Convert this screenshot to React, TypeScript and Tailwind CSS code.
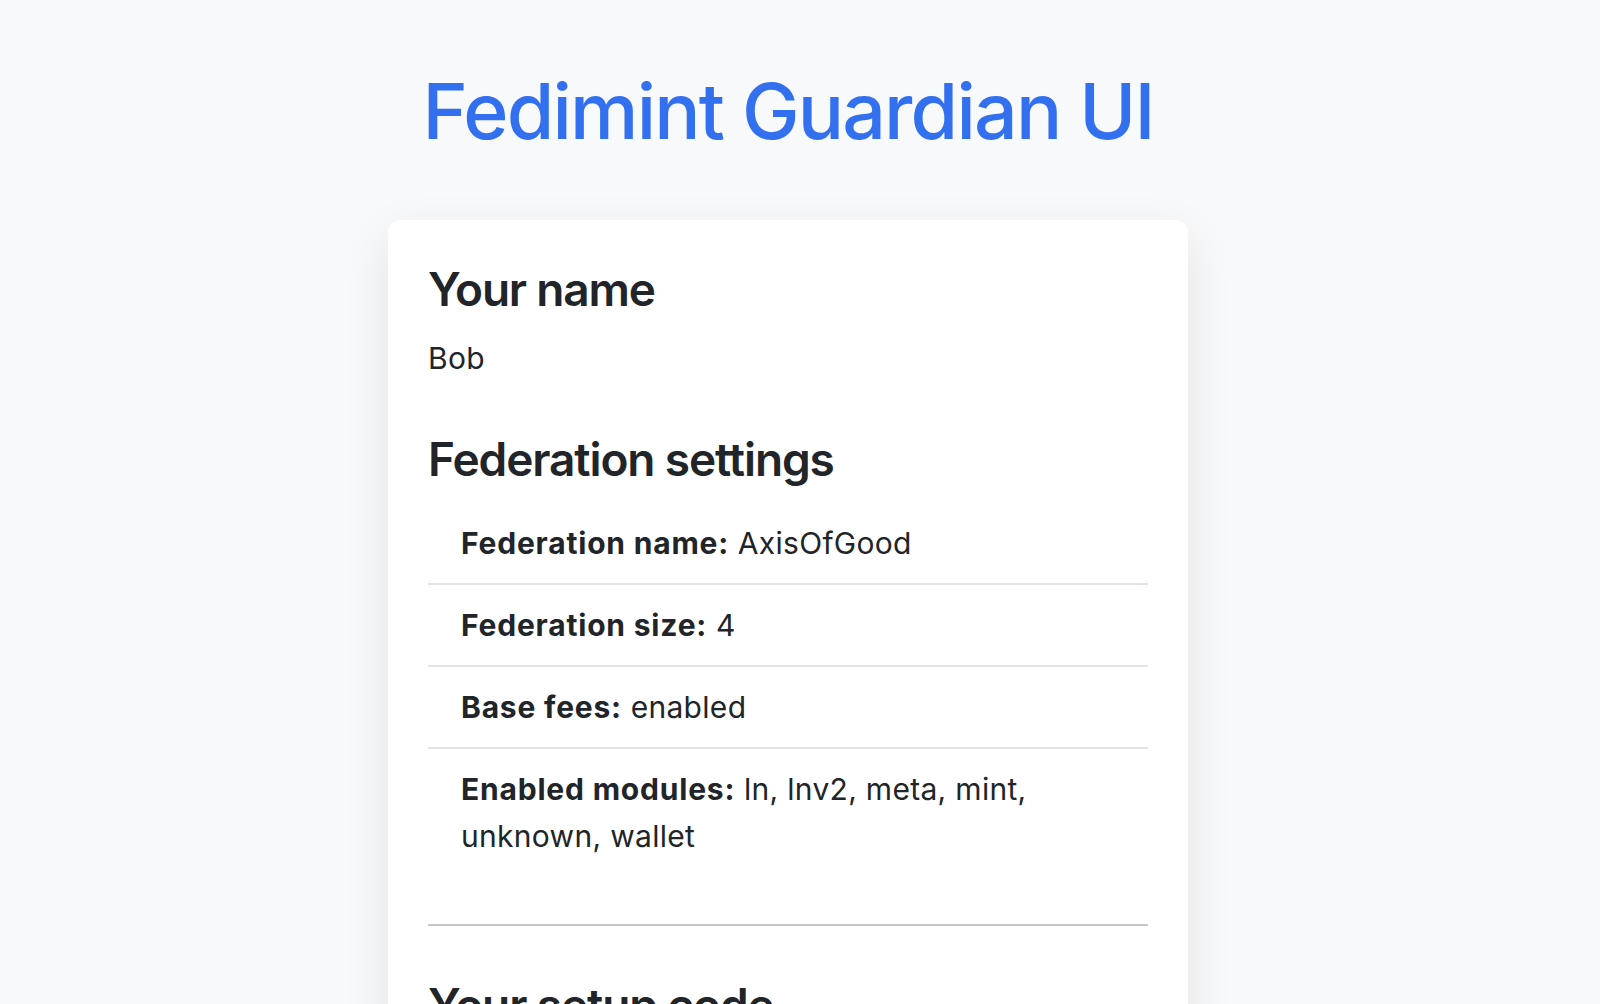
import React from 'react';

const settings = [
  { label: 'Federation name:', value: 'AxisOfGood' },
  { label: 'Federation size:', value: '4' },
  { label: 'Base fees:', value: 'enabled' },
  { label: 'Enabled modules:', value: 'ln, lnv2, meta, mint, unknown, wallet' },
];

export default function App() {
  return (
    <div className="min-h-screen bg-[#f8f9fa] text-[#212529] font-['Inter','Liberation_Sans',sans-serif] pr-[24px]">
      <div className="mx-auto w-[800px] pt-16">
        {/* Header */}
        <h1 className="text-center text-[77px] leading-[94px] font-medium tracking-[-1.8px] text-[#3370ef]">
          Fedimint Guardian UI
        </h1>

        {/* Card */}
        <div className="mt-[62px] bg-white rounded-[13px] shadow-[0_16px_48px_rgba(0,0,0,0.09)] px-10 pt-[42px] pb-10">
          <h3 className="text-[46px] leading-[55px] font-semibold tracking-[-1.2px]">Your name</h3>
          <p className="mt-[19px] text-[30px] leading-[44px] tracking-[0.35px]">Bob</p>

          <h3 className="mt-[52px] text-[46px] leading-[55px] font-semibold tracking-[-1.1px]">Federation settings</h3>
          <ul className="mt-[16px]">
            {settings.map((s, i) => (
              <li
                key={s.label}
                className={
                  'pl-[33px] pr-[33px] pt-[17px] pb-[16px] text-[30px] leading-[47px] tracking-[0.3px] ' +
                  (i < settings.length - 1 ? 'border-b-2 border-[#e1e4e7]' : '')
                }
              >
                <span className="font-bold tracking-[0.8px]">{s.label}</span> {s.value}
              </li>
            ))}
          </ul>

          <hr className="mt-[48px] border-t-2 border-[#c8c8c8]" />

          <h3 className="mt-[52px] text-[46px] leading-[55px] font-semibold tracking-[-1.1px]">Your setup code</h3>
          <div className="h-[200px]" />
        </div>
      </div>
    </div>
  );
}
